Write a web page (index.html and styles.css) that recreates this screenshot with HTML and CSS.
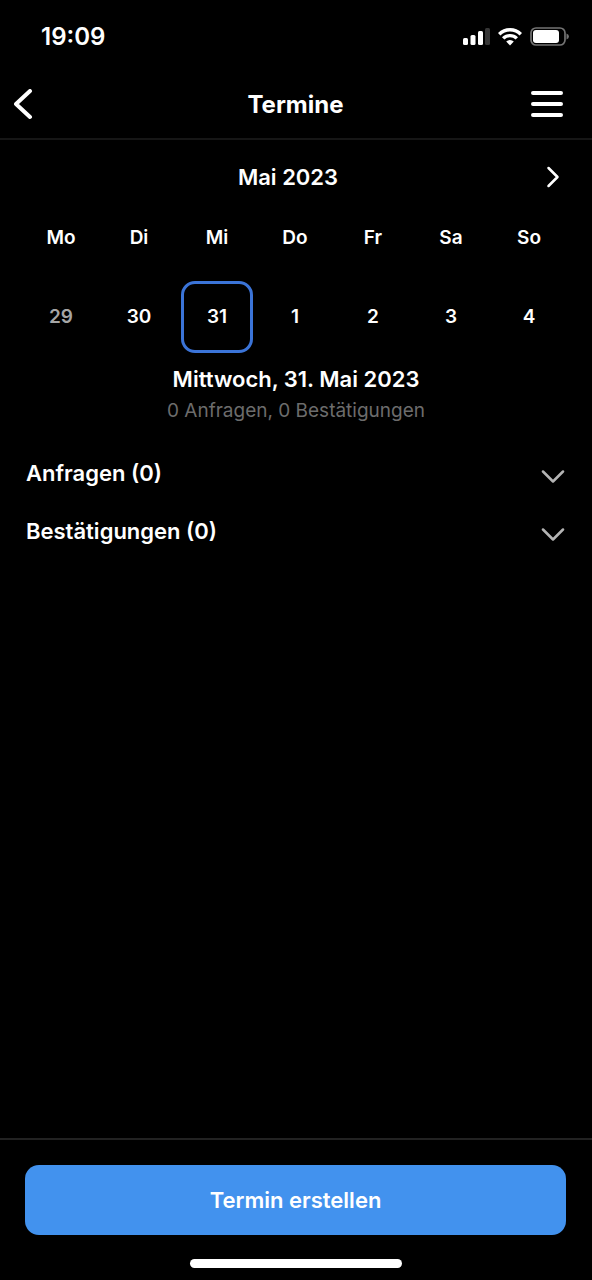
FILE: index.html
```html
<!DOCTYPE html>
<html lang="de">
<head>
<meta charset="utf-8">
<meta name="viewport" content="width=device-width, initial-scale=1">
<title>Termine</title>
<link rel="stylesheet" href="styles.css">
</head>
<body>
<div class="screen">
  <div class="status">
    <time class="clock">19:09</time>
    <div class="indicators">
      <svg width="28" height="20" viewBox="0 0 28 20" aria-hidden="true">
        <rect x="1" y="11" width="5" height="7" rx="1.5" fill="#fff"/>
        <rect x="8.500" y="8" width="5" height="10" rx="1.500" fill="#fff"/>
        <rect x="16" y="4" width="5" height="14" rx="1.500" fill="#fff"/>
        <rect x="23" y="1" width="5" height="17" rx="1.500" fill="#363636"/>
      </svg>
      <svg width="24" height="20" viewBox="0 0 24 20" fill="none" stroke="#fff" stroke-width="3.400" aria-hidden="true">
        <path d="M1.200 7.200a15.300 15.300 0 0 1 21.600 0"/>
        <path d="M5.200 11.400a9.600 9.600 0 0 1 13.600 0"/>
        <path d="M12 18.400l-3.800-3.900a5.400 5.400 0 0 1 7.600 0z" fill="#fff" stroke="none"/>
      </svg>
      <svg width="40" height="20" viewBox="0 0 40 20" aria-hidden="true">
        <rect x="1" y="1" width="34" height="17" rx="5" fill="none" stroke="#737373" stroke-width="1.700"/>
        <rect x="3" y="3" width="26" height="13" rx="3" fill="#fff"/>
        <path d="M36.500 6.500q2.500 1 2.500 3t-2.500 3z" fill="#737373"/>
      </svg>
    </div>
  </div>

  <header class="header">
    <button class="icon-button" type="button" aria-label="Zurück">
      <svg width="20" height="32" viewBox="0 0 20 32" fill="none" stroke="#fff" stroke-width="4" stroke-linecap="round" stroke-linejoin="round"><path d="M16 2L2 15l14 13"/></svg>
    </button>
    <h1 class="title">Termine</h1>
    <button class="icon-button menu-button" type="button" aria-label="Menü">
      <svg width="32" height="30" viewBox="0 0 32 30" stroke="#fff" stroke-width="4" stroke-linecap="round"><path d="M2 3h28M2 14h28M2 25h28"/></svg>
    </button>
  </header>

  <main class="content">
    <div class="month">
      <h2 class="heading">Mai 2023</h2>
      <button class="icon-button" type="button" aria-label="Nächste Woche">
        <svg width="14" height="22" viewBox="0 0 14 22" fill="none" stroke="#fff" stroke-width="2.500" stroke-linecap="round" stroke-linejoin="round"><path d="M2.500 2l9 9-9 9"/></svg>
      </button>
    </div>

    <table class="week">
      <thead>
        <tr><th scope="col">Mo</th><th scope="col">Di</th><th scope="col">Mi</th><th scope="col">Do</th><th scope="col">Fr</th><th scope="col">Sa</th><th scope="col">So</th></tr>
      </thead>
      <tbody>
        <tr>
          <td><button class="day day-past" type="button">29</button></td>
          <td><button class="day" type="button">30</button></td>
          <td><button class="day day-selected" type="button" aria-pressed="true">31</button></td>
          <td><button class="day" type="button">1</button></td>
          <td><button class="day" type="button">2</button></td>
          <td><button class="day" type="button">3</button></td>
          <td><button class="day" type="button">4</button></td>
        </tr>
      </tbody>
    </table>

    <section class="summary">
      <h2 class="heading">Mittwoch, 31. Mai 2023</h2>
      <p class="counts">0 Anfragen, 0 Bestätigungen</p>
    </section>

    <div class="groups">
      <button class="group" type="button" aria-expanded="false">
        <span>Anfragen (0)</span>
        <svg width="24" height="14" viewBox="0 0 24 14" fill="none" stroke="#b4b4b4" stroke-width="2.500" stroke-linecap="round" stroke-linejoin="round"><path d="M2 1.500l10 10 10-10"/></svg>
      </button>
      <button class="group" type="button" aria-expanded="false">
        <span>Bestätigungen (0)</span>
        <svg width="24" height="14" viewBox="0 0 24 14" fill="none" stroke="#b4b4b4" stroke-width="2.500" stroke-linecap="round" stroke-linejoin="round"><path d="M2 1.500l10 10 10-10"/></svg>
      </button>
    </div>
  </main>

  <footer class="footer">
    <button class="primary" type="button">Termin erstellen</button>
    <div class="home-bar"></div>
  </footer>
</div>
</body>
</html>
```
FILE: styles.css
```css
* {
  box-sizing: border-box;
}

body {
  margin: 0;
  background: #000;
  color: #fff;
  font-family: Inter, "Liberation Sans", sans-serif;
}

button {
  padding: 0;
  border: 0;
  background: none;
  color: inherit;
  font: inherit;
  cursor: pointer;
}

h1, h2, p {
  margin: 0;
}

svg {
  display: block;
}

.screen {
  display: flex;
  flex-direction: column;
  min-height: 100vh;
}

.status {
  display: flex;
  align-items: center;
  justify-content: space-between;
  height: 72px;
  padding: 1px 22px 0 41px;
}

.clock {
  font-size: 24px;
  font-weight: 600;
}

.indicators {
  display: flex;
  gap: 8px;
}

.header {
  display: grid;
  grid-template-columns: 1fr auto 1fr;
  align-items: center;
  height: 68px;
  padding: 0 29px 0 14px;
  border-bottom: 2px solid #161616;
}

.title {
  padding-left: 14px;
  font-size: 24px;
  font-weight: 700;
  line-height: 32px;
}

.icon-button {
  justify-self: start;
}

.menu-button {
  justify-self: end;
}

.content {
  flex: 1;
}

.month {
  display: flex;
  align-items: center;
  height: 74px;
  padding: 0 32px 0 30px;
}

.month .heading {
  flex: 1;
  text-align: center;
}

.heading {
  font-size: 22px;
  font-weight: 600;
  line-height: 32px;
}

.week {
  width: calc(100% - 46px);
  margin: 0 24px 0 22px;
  border-collapse: collapse;
  table-layout: fixed;
}

.week th {
  height: 64px;
  padding: 0 0 18px;
  font-size: 19px;
  font-weight: 600;
}

.week td {
  padding: 3px;
}

.day {
  display: block;
  width: 100%;
  height: 72px;
  padding-bottom: 2px;
  border: 3px solid transparent;
  border-radius: 14px;
  font-size: 19px;
  font-weight: 600;
}

.day-past {
  color: #a6a6a6;
}

.day-selected {
  border-color: #3b74d8;
}

.summary {
  padding-top: 7px;
  text-align: center;
}

.counts {
  color: #6c6c6c;
  font-size: 19px;
  line-height: 32px;
}

.groups {
  padding: 17px 27px 17px 26px;
}

.group {
  display: flex;
  align-items: center;
  justify-content: space-between;
  width: 100%;
  height: 58px;
  font-size: 22px;
  font-weight: 600;
}

.group svg {
  margin-top: 8px;
}

.footer {
  display: flex;
  flex-direction: column;
  align-items: center;
  gap: 24px;
  padding: 25px 26px 12px 25px;
  border-top: 2px solid #222;
}

.primary {
  width: 100%;
  height: 70px;
  border-radius: 14px;
  background: #4292ee;
  font-size: 22px;
  font-weight: 600;
}

.home-bar {
  width: 212px;
  height: 9px;
  border-radius: 5px;
  background: #fff;
}
```
